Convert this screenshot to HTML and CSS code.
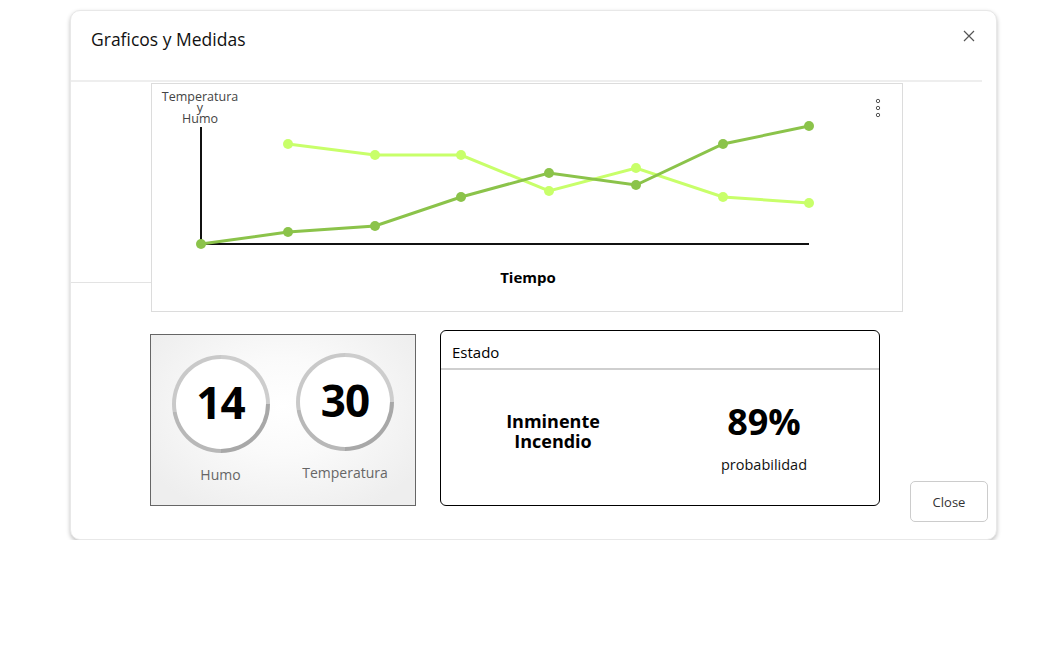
FILE: index.html
```html
<!DOCTYPE html>
<html lang="es">
<head>
<meta charset="utf-8">
<title>Graficos y Medidas</title>
<link rel="stylesheet" href="styles.css">
</head>
<body>
<div class="dialog">
  <div class="dialog-header">
    <h1 class="dialog-title">Graficos y Medidas</h1>
    <button class="icon-close" aria-label="Cerrar">
      <svg width="12" height="12" viewBox="0 0 12 12"><path d="M1 1L11 11M11 1L1 11" stroke="#555" stroke-width="1.2" fill="none"/></svg>
    </button>
  </div>
  <div class="divider"></div>
  <div class="row-chart">
    <div class="spacer-chart"></div>
    <div class="chart-card">
      <svg class="chart" width="750" height="227" viewBox="0 0 750 227">
        <text class="ylabel" x="48" y="17" text-anchor="middle">Temperatura</text>
        <text class="ylabel" x="48" y="28" text-anchor="middle">y</text>
        <text class="ylabel" x="48" y="39" text-anchor="middle">Humo</text>
        <line x1="49" y1="43" x2="49" y2="161" stroke="#111" stroke-width="2"/>
        <line x1="48" y1="160" x2="657" y2="160" stroke="#111" stroke-width="2"/>
        <polyline points="136,60 223,71 309,71 397,107 484,84 571,113 657,119" fill="none" stroke="#c8ff6a" stroke-width="3"/>
        <polyline points="49,160 136,148 223,142 309,113 397,89 484,101 571,60 657,42" fill="none" stroke="#8bc34a" stroke-width="3"/>
        <g fill="#c8ff6a">
          <circle cx="136" cy="60" r="5"/><circle cx="223" cy="71" r="5"/><circle cx="309" cy="71" r="5"/>
          <circle cx="397" cy="107" r="5"/><circle cx="484" cy="84" r="5"/><circle cx="571" cy="113" r="5"/>
          <circle cx="657" cy="119" r="5"/>
        </g>
        <g fill="#8bc34a">
          <circle cx="49" cy="160" r="5"/><circle cx="136" cy="148" r="5"/><circle cx="223" cy="142" r="5"/>
          <circle cx="309" cy="113" r="5"/><circle cx="397" cy="89" r="5"/><circle cx="484" cy="101" r="5"/>
          <circle cx="571" cy="60" r="5"/><circle cx="657" cy="42" r="5"/>
        </g>
        <text class="xlabel" x="376" y="199" text-anchor="middle">Tiempo</text>
        <g fill="none" stroke="#555" stroke-width="1">
          <circle cx="726" cy="17" r="1.7"/><circle cx="726" cy="24" r="1.7"/><circle cx="726" cy="31" r="1.7"/>
        </g>
      </svg>
    </div>
  </div>
  <div class="row-info">
    <div class="spacer-info"></div>
    <div class="gauges">
      <div class="gauge gauge-low">
        <div class="ring"><div class="ring-inner"><span class="gauge-value">14</span></div></div>
        <div class="gauge-label">Humo</div>
      </div>
      <div class="gauge">
        <div class="ring"><div class="ring-inner"><span class="gauge-value">30</span></div></div>
        <div class="gauge-label">Temperatura</div>
      </div>
    </div>
    <div class="estado">
      <div class="estado-header">Estado</div>
      <div class="estado-body">
        <div class="estado-status">Inminente<br>Incendio</div>
        <div class="estado-prob">
          <div class="prob-value">89%</div>
          <div class="prob-label">probabilidad</div>
        </div>
      </div>
    </div>
    <button class="btn-close">Close</button>
  </div>
</div>
</body>
</html>
```

FILE: styles.css
```css
* { box-sizing: border-box; }
html, body { margin: 0; padding: 0; background: #fff; }
body { font-family: "Open Sans", "Noto Sans", sans-serif; color: #000; }

.dialog {
  margin: 10px 0 0 70px;
  width: 927px;
  border: 1px solid #e8e8e8;
  border-radius: 10px;
  background: #fff;
  box-shadow: 0 2px 4px rgba(0,0,0,0.25);
  padding-bottom: 17px;
}

.dialog-header {
  height: 69px;
  display: flex;
  justify-content: space-between;
  align-items: flex-start;
  padding: 16px 21px 0 20px;
}
.dialog-title {
  margin: 0;
  font-size: 17.5px;
  font-weight: 400;
  line-height: 24px;
  color: #111;
}
.icon-close {
  margin-top: 3px;
  padding: 0;
  border: 0;
  background: none;
  width: 12px;
  height: 12px;
  display: block;
}
.icon-close svg { display: block; }

.divider {
  height: 2px;
  background: #eeeeee;
  margin-right: 14px;
}

.row-chart {
  display: flex;
  margin-top: 1px;
}
.spacer-chart {
  width: 80px;
  height: 200px;
  border-bottom: 1px solid #e3e3e3;
}
.chart-card {
  width: 752px;
  height: 229px;
  border: 1px solid #dcdcdc;
}
.chart { display: block; }
.ylabel { font-family: "Open Sans", sans-serif; font-size: 12.5px; fill: #444; }
.xlabel { font-family: "Open Sans", sans-serif; font-size: 15px; font-weight: 700; fill: #000; }

.row-info {
  display: flex;
  align-items: flex-end;
  padding-top: 18px;
}
.spacer-info { width: 79px; }

.gauges {
  width: 266px;
  height: 172px;
  margin-bottom: 16px;
  border: 1px solid #666;
  background: radial-gradient(ellipse at 50% 42%, #ffffff 0%, #fafafa 35%, #eeeeee 85%);
  display: flex;
  align-items: flex-start;
  padding: 18px 0 0 21px;
  gap: 27px;
}
.gauge {
  width: 98px;
  display: flex;
  flex-direction: column;
  align-items: center;
}
.gauge-low { margin-top: 2px; width: 97px; }
.ring {
  width: 98px;
  height: 98px;
  border-radius: 50%;
  padding: 4px;
  background: conic-gradient(#cdcdcd 0deg 90deg, #a8a8a8 90deg 180deg, #b8b8b8 180deg 260deg, #c9c9c9 260deg 360deg);
}
.ring-inner {
  width: 100%;
  height: 100%;
  border-radius: 50%;
  background: #fff;
  display: flex;
  align-items: center;
  justify-content: center;
  padding-bottom: 4px;
}
.gauge-value {
  font-size: 44px;
  font-weight: 700;
  line-height: 50px;
  letter-spacing: -1px;
}
.gauge-label {
  margin-top: 12px;
  font-size: 14px;
  line-height: 19px;
  color: #666;
}

.estado {
  margin-left: 24px;
  width: 440px;
  height: 176px;
  margin-bottom: 16px;
  border: 1px solid #000;
  border-radius: 6px;
  display: flex;
  flex-direction: column;
}
.estado-header {
  height: 39px;
  padding: 11px 0 0 11px;
  font-size: 15px;
  line-height: 20px;
  border-bottom: 2px solid #cfcfcf;
}
.estado-body {
  display: grid;
  grid-template-columns: 224px 198px;
  text-align: center;
}
.estado-status {
  margin-top: 41px;
  font-size: 18px;
  font-weight: 700;
  line-height: 20px;
}
.estado-prob { margin-top: 32px; }
.prob-value {
  font-size: 36px;
  font-weight: 700;
  line-height: 40px;
}
.prob-label {
  margin-top: 13px;
  font-size: 14.5px;
  line-height: 20px;
  color: #111;
}

.btn-close {
  margin-left: 30px;
  width: 78px;
  height: 41px;
  border: 1px solid #cccccc;
  border-radius: 5px;
  background: #fff;
  font-family: "Open Sans", sans-serif;
  font-size: 13px;
  color: #333;
  padding: 0;
}
```
